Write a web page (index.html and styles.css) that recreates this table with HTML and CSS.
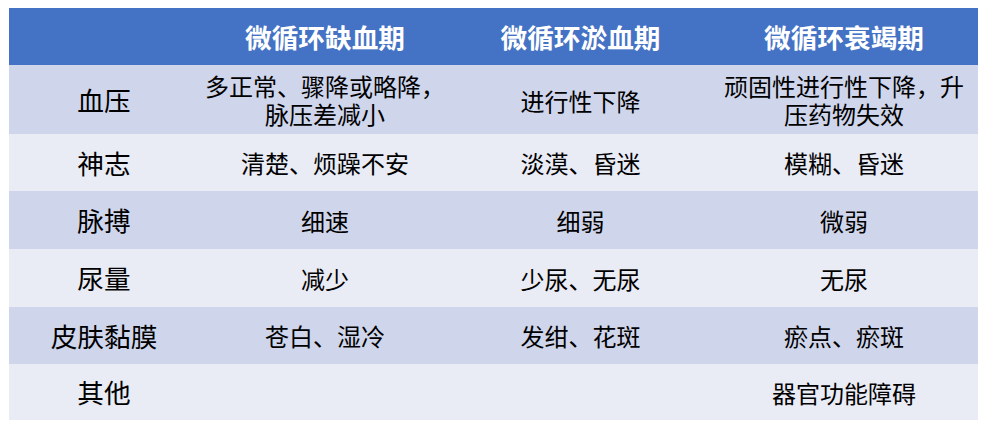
FILE: index.html
```html
<!DOCTYPE html>
<html lang="zh-CN">
<head>
<meta charset="utf-8">
<link rel="stylesheet" href="styles.css">
</head>
<body>
<table class="shock">
  <colgroup>
    <col class="c1"><col class="c2"><col class="c3"><col class="c4">
  </colgroup>
  <thead>
    <tr class="head">
      <th></th>
      <th>微循环缺血期</th>
      <th>微循环淤血期</th>
      <th>微循环衰竭期</th>
    </tr>
  </thead>
  <tbody>
    <tr class="odd r1">
      <td class="label">血压</td>
      <td class="two">多正常、骤降或略降，<br>脉压差减小</td>
      <td>进行性下降</td>
      <td class="two">顽固性进行性下降，升<br>压药物失效</td>
    </tr>
    <tr class="even h57">
      <td class="label">神志</td>
      <td>清楚、烦躁不安</td>
      <td>淡漠、昏迷</td>
      <td>模糊、昏迷</td>
    </tr>
    <tr class="odd h58">
      <td class="label">脉搏</td>
      <td>细速</td>
      <td>细弱</td>
      <td>微弱</td>
    </tr>
    <tr class="even h58">
      <td class="label">尿量</td>
      <td>减少</td>
      <td>少尿、无尿</td>
      <td>无尿</td>
    </tr>
    <tr class="odd h57">
      <td class="label">皮肤黏膜</td>
      <td>苍白、湿冷</td>
      <td>发绀、花斑</td>
      <td>瘀点、瘀斑</td>
    </tr>
    <tr class="even h56">
      <td class="label">其他</td>
      <td></td>
      <td></td>
      <td>器官功能障碍</td>
    </tr>
  </tbody>
</table>
</body>
</html>
```

FILE: styles.css
```css
html, body {
  margin: 0;
  padding: 0;
  background: #ffffff;
}
body {
  padding: 8px 0 0 9px;
  font-family: "Noto Sans CJK SC", "Noto Sans", sans-serif;
  color: #000000;
}
.shock {
  border-collapse: collapse;
  border-spacing: 0;
  table-layout: fixed;
  width: 969px;
}
.c1 { width: 190px; }
.c2 { width: 252px; }
.c3 { width: 259px; }
.c4 { width: 268px; }

.shock th,
.shock td {
  padding: 0;
  text-align: center;
  vertical-align: middle;
  white-space: nowrap;
}
.head {
  height: 57px;
  background: #4472c4;
}
.head th {
  color: #ffffff;
  font-weight: bold;
  font-size: 26.67px;
  line-height: 30px;
}
.shock td {
  font-size: 24px;
  line-height: 27px;
}
.shock td.label {
  font-size: 26.67px;
  line-height: 30px;
}
.shock td.two {
  line-height: 28px;
}
.odd { background: #cfd5ea; }
.even { background: #e9ebf5; }
.r1 { height: 69px; }
.r1 td { padding-top: 1px; }
.h56 { height: 56px; }
.h57 { height: 57px; }
.h58 { height: 58px; }
```
